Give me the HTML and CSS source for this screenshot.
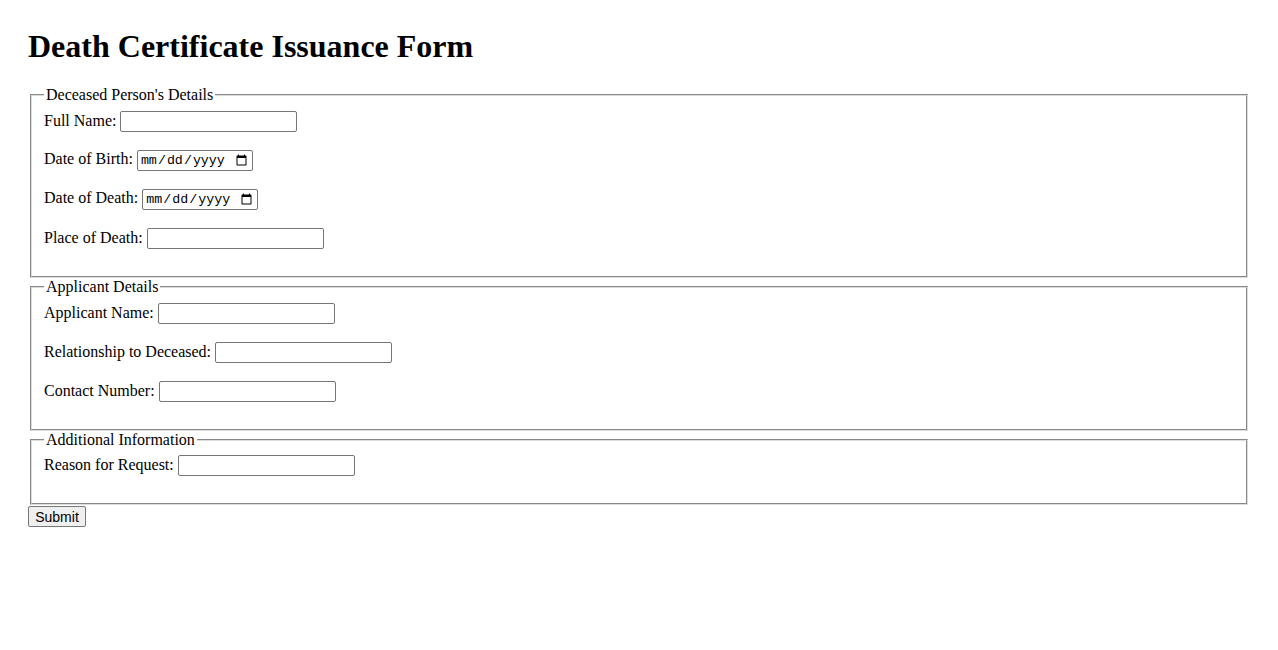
FILE: index.html
```html
<!DOCTYPE html>
<html>
<head>
<meta charset="utf-8">
<title>Death Certificate Issuance Form</title>
<link rel="stylesheet" href="styles.css">
</head>
<body>
<div class="page">
<h1 class="title">Death Certificate Issuance Form</h1>
<form class="form">
  <fieldset class="group">
    <legend class="group-title">Deceased Person's Details</legend>
    <label class="label" for="fullName">Full Name:</label> <input class="field" type="text" id="fullName"><br><br>
    <label class="label" for="dob">Date of Birth:</label> <input class="field date" type="date" id="dob"><br><br>
    <label class="label" for="dod">Date of Death:</label> <input class="field date" type="date" id="dod"><br><br>
    <label class="label" for="pod">Place of Death:</label> <input class="field" type="text" id="pod"><br><br>
  </fieldset>
  <fieldset class="group">
    <legend class="group-title">Applicant Details</legend>
    <label class="label" for="applicant">Applicant Name:</label> <input class="field" type="text" id="applicant"><br><br>
    <label class="label" for="relation">Relationship to Deceased:</label> <input class="field" type="text" id="relation"><br><br>
    <label class="label" for="contact">Contact Number:</label> <input class="field" type="tel" id="contact"><br><br>
  </fieldset>
  <fieldset class="group">
    <legend class="group-title">Additional Information</legend>
    <label class="label" for="reason">Reason for Request:</label> <input class="field" type="text" id="reason"><br><br>
  </fieldset>
  <button class="submit" type="submit">Submit</button>
</form>
</div>
</body>
</html>
```
FILE: styles.css
```css
html, body {
  margin: 0;
  padding: 0;
  background: #fff;
}
body {
  font-family: "Liberation Serif", "Times New Roman", serif;
  font-size: 16px;
  color: #000;
}
.page {
  padding: 28px;
}
.title {
  font-size: 32px;
  font-weight: bold;
  margin: 0 0 21.44px 0;
  line-height: normal;
}
.form {
  margin: 0;
}
.group {
  margin: 0 2px;
  padding: 6.6px 12px 9px 12px;
  border: 2px groove #dcdcdc;
  min-width: min-content;
}
.group-title {
  padding: 0 2px;
}
.field {
  box-sizing: border-box;
  width: 177px;
  height: 21px;
  border: 1px solid #767676;
  border-radius: 2px;
  padding: 1px 2px;
  font-family: "Liberation Sans", Arial, sans-serif;
  font-size: 13.33px;
  margin: 0;
  vertical-align: baseline;
}
.field.date {
  width: 116px;
  font-family: "Liberation Mono", "Courier New", monospace;
}
.submit {
  box-sizing: border-box;
  font-family: "Liberation Sans", Arial, sans-serif;
  font-size: 14px;
  height: 21px;
  width: 58px;
  padding: 1px 6px;
  border: 1px solid #767676;
  border-radius: 2px;
  background: #efefef;
  color: #000;
  margin: 1px 0 0 0;
}
```
